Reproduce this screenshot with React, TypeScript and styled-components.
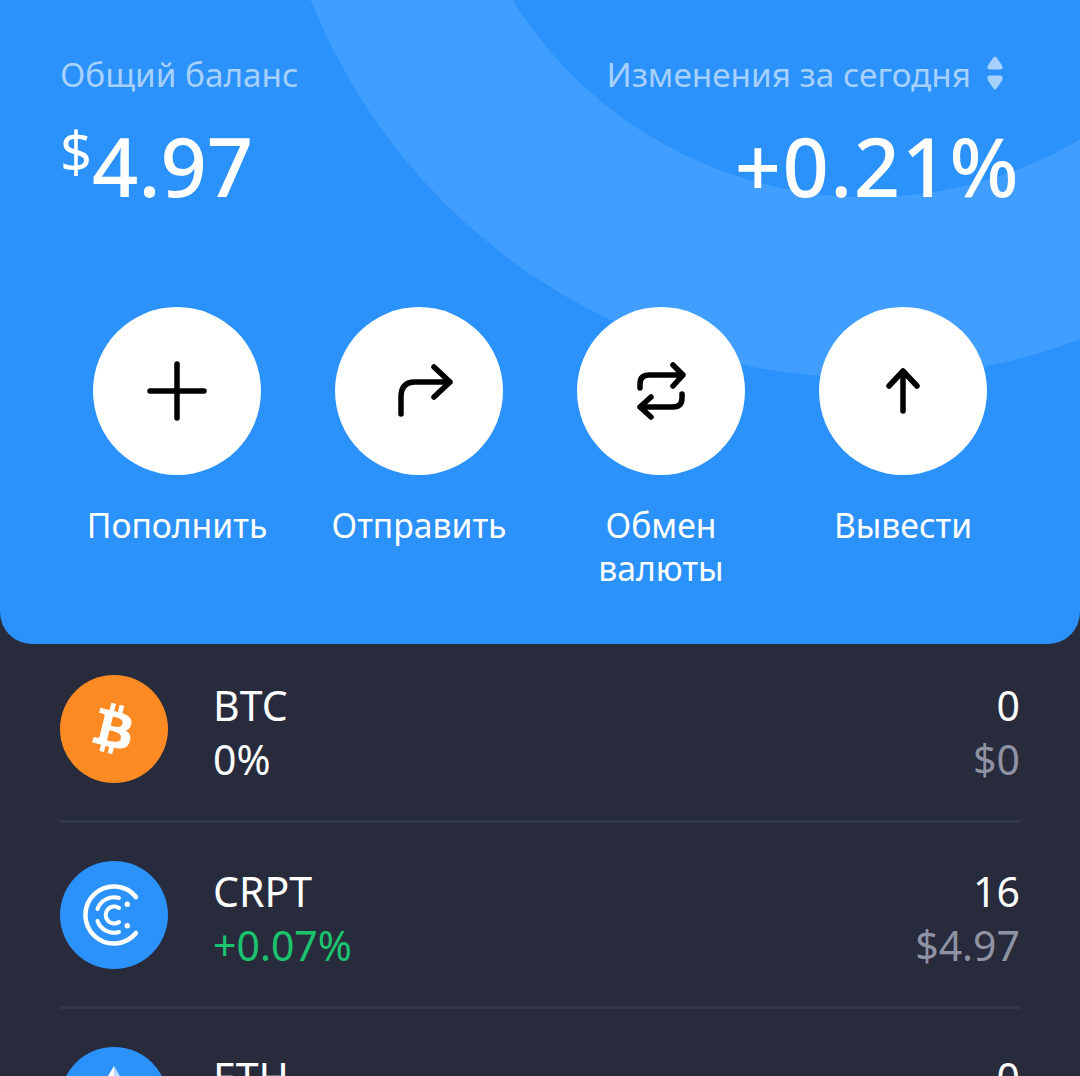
import React from "react";
import styled, { createGlobalStyle } from "styled-components";
import { FaBtc } from "react-icons/fa";

const Global = createGlobalStyle`
  html, body { margin: 0; padding: 0; background: #282b3c; }
  body { font-family: "Noto Sans", "Open Sans", sans-serif; overflow: hidden; }
  * { box-sizing: border-box; }
`;

const Page = styled.div`
  width: 1080px;
  height: 1076px;
  overflow: hidden;
  background: #282b3c;
`;

const Header = styled.header`
  position: relative;
  height: 644px;
  overflow: hidden;
  background: #2b91fb;
  border-radius: 0 0 32px 32px;
  padding: 50px 60px 0;
`;

const Ring = styled.div`
  position: absolute;
  left: 268px;
  top: -822px;
  width: 1200px;
  height: 1200px;
  border-radius: 50%;
  background: radial-gradient(circle closest-side, #2b91fb 69.8%, #3f9eff 69.9%);
`;

const Summary = styled.section`
  position: relative;
  display: flex;
  justify-content: space-between;
`;

const SummaryColumn = styled.div<{ $end?: boolean }>`
  display: flex;
  flex-direction: column;
  align-items: ${(p) => (p.$end ? "flex-end" : "flex-start")};
`;

const SummaryLabel = styled.div`
  display: flex;
  align-items: center;
  gap: 15px;
  height: 50px;
  font-size: 33.300px;
  margin-top: -1px;
  color: #a6d0ff;
  white-space: nowrap;
`;

const SortIcon = styled.svg`
  width: 18px;
  height: 36px;
  margin-right: 16px;
  margin-top: -3px;
`;

const SummaryValue = styled.div<{ $wide?: boolean }>`
  display: flex;
  align-items: flex-start;
  margin-top: 17px;
  height: 100px;
  font-size: 81px;
  line-height: 100px;
  font-weight: 500;
  letter-spacing: ${(p) => (p.$wide ? "1.5px" : "0")};
  color: #fff;
  white-space: nowrap;
`;

const Currency = styled.span`
  font-size: 56px;
  line-height: 70px;
  font-weight: 400;
`;

const Actions = styled.nav`
  position: relative;
  display: flex;
  justify-content: center;
  margin-top: 91px;
`;

const Action = styled.div`
  flex: none;
  width: 242px;
  display: flex;
  flex-direction: column;
  align-items: center;
`;

const ActionCircle = styled.div`
  width: 168px;
  height: 168px;
  border-radius: 50%;
  background: #fff;
  display: flex;
  align-items: center;
  justify-content: center;
`;

const ActionIcon = styled.svg`
  width: 168px;
  height: 168px;
  fill: none;
  stroke: #000;
  stroke-width: 5.500;
  stroke-linecap: round;
  stroke-linejoin: round;
`;

const ActionLabel = styled.div`
  margin-top: 29px;
  width: 200px;
  text-align: center;
  font-size: 33.700px;
  line-height: 43px;
  color: #fff;
`;

const List = styled.main`
  padding: 31px 60px 0;
`;

const Row = styled.div`
  display: flex;
  align-items: flex-start;
  height: 148px;
  margin-bottom: 38px;
  border-bottom: 3px solid #33374a;
`;

const CoinIcon = styled.div<{ $bg: string }>`
  flex: none;
  width: 108px;
  height: 108px;
  border-radius: 50%;
  background: ${(p) => p.$bg};
  color: #fff;
  display: flex;
  align-items: center;
  justify-content: center;
`;

const BitcoinGlyph = styled(FaBtc)`
  width: 50px;
  height: 50px;
  transform: rotate(14deg);
`;

const CoinText = styled.div`
  margin-left: 45px;
  flex: 1;
  padding-top: 3px;
`;

const CoinAmounts = styled.div`
  text-align: right;
  padding-top: 3px;
`;

const Line = styled.div<{ $color?: string }>`
  font-size: 41px;
  line-height: 54px;
  color: ${(p) => p.$color ?? "#fff"};
`;

const GREY = "#8f92a3";

const coins = [
  { name: "BTC", change: "0%", changeColor: "#fff", amount: "0", usd: "$0", bg: "#fe8a23", icon: <BitcoinGlyph /> },
  {
    name: "CRPT",
    change: "+0.07%",
    changeColor: "#1cc36e",
    amount: "16",
    usd: "$4.97",
    bg: "#2b91fb",
    icon: (
      <svg width="108" height="108" viewBox="0 0 108 108" fill="none" stroke="#fff" strokeLinecap="round">
        <path d="M76 36 A28.500 28.500 0 1 0 76 72" strokeWidth="4.500" />
        <path d="M37.500 48 A17.500 17.500 0 0 1 59 37" strokeWidth="4" />
        <path d="M37.500 60 A17.500 17.500 0 0 0 59 71" strokeWidth="4" />
        <path d="M59 47 A8.500 8.500 0 1 0 59 61" strokeWidth="4" />
        <circle cx="67.300" cy="43.300" r="2.700" fill="#fff" stroke="none" />
        <circle cx="67.300" cy="64.700" r="2.700" fill="#fff" stroke="none" />
      </svg>
    ),
  },
  {
    name: "ETH",
    change: "+0.00%",
    changeColor: "#1cc36e",
    amount: "0",
    usd: "$0",
    bg: "#2b91fb",
    icon: (
      <svg width="108" height="108" viewBox="0 0 108 108">
        <path d="M54 19 L32 56 L54 69 Z" fill="#fff" />
        <path d="M54 19 L76 56 L54 69 Z" fill="#b9dcff" />
      </svg>
    ),
  },
];

const actions = [
  { label: "Пополнить", d: "M84 57V111M57 84H111" },
  { label: "Отправить", d: "M66 107V90Q66 75 80 75H115M99 60L115 75L99 90" },
  {
    label: "Обмен валюты",
    d: "M63 81V77Q63 68 72 68H106M96 58L106 68L96 79M105 87V91Q105 100 96 100H63M74 90L63 100L74 110",
  },
  { label: "Вывести", d: "M84 104V64M70 79L84 64L98 79" },
];

export default function App() {
  return (
    <Page>
      <Global />
      <Header>
        <Ring />
        <Summary>
          <SummaryColumn>
            <SummaryLabel>Общий баланс</SummaryLabel>
            <SummaryValue>
              <Currency>$</Currency>4.97
            </SummaryValue>
          </SummaryColumn>
          <SummaryColumn $end>
            <SummaryLabel>
              Изменения за сегодня
              <SortIcon viewBox="0 0 18 36">
                <path d="M9 1.500 Q10 1.500 11 3 L16 10.500 Q18 14.500 14 14.500 H4 Q0 14.500 2 10.500 L7 3 Q8 1.500 9 1.500 Z" fill="#a6d0ff" />
                <path d="M9 34.500 Q10 34.500 11 33 L16 25.500 Q18 20.500 14 20.500 H4 Q0 20.500 2 25.500 L7 33 Q8 34.500 9 34.500 Z" fill="#a6d0ff" />
              </SortIcon>
            </SummaryLabel>
            <SummaryValue $wide>+0.21%</SummaryValue>
          </SummaryColumn>
        </Summary>
        <Actions>
          {actions.map((a) => (
            <Action key={a.label}>
              <ActionCircle>
                <ActionIcon viewBox="0 0 168 168">
                  <path d={a.d} />
                </ActionIcon>
              </ActionCircle>
              <ActionLabel>{a.label}</ActionLabel>
            </Action>
          ))}
        </Actions>
      </Header>
      <List>
        {coins.map((c) => (
          <Row key={c.name}>
            <CoinIcon $bg={c.bg}>{c.icon}</CoinIcon>
            <CoinText>
              <Line>{c.name}</Line>
              <Line $color={c.changeColor}>{c.change}</Line>
            </CoinText>
            <CoinAmounts>
              <Line>{c.amount}</Line>
              <Line $color={GREY}>{c.usd}</Line>
            </CoinAmounts>
          </Row>
        ))}
      </List>
    </Page>
  );
}
